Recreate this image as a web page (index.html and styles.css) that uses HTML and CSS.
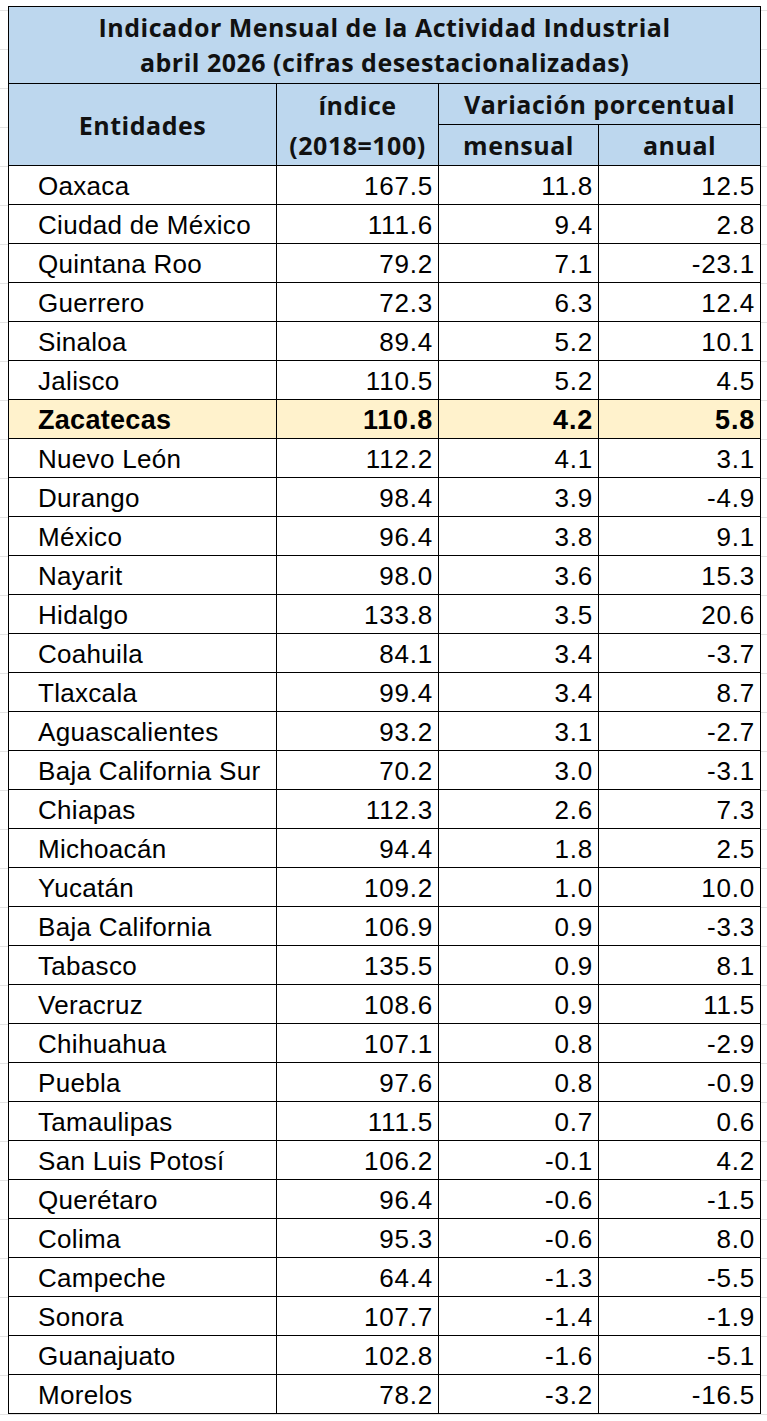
FILE: index.html
```html
<!DOCTYPE html>
<html lang="es">
<head>
<meta charset="utf-8">
<title>Indicador Mensual de la Actividad Industrial</title>
<link rel="stylesheet" href="styles.css">
</head>
<body>
<table class="imai">
  <colgroup>
    <col class="c-ent">
    <col class="c-idx">
    <col class="c-men">
    <col class="c-anu">
  </colgroup>
  <thead>
    <tr class="title-row">
      <th colspan="4" class="title">Indicador Mensual de la Actividad Industrial<br>abril 2026 (cifras desestacionalizadas)</th>
    </tr>
    <tr class="head-row">
      <th rowspan="2" class="hd">Entidades</th>
      <th rowspan="2" class="hd idx">índice<br>(2018=100)</th>
      <th colspan="2" class="hd">Variación porcentual</th>
    </tr>
    <tr class="head-row">
      <th class="hd">mensual</th>
      <th class="hd">anual</th>
    </tr>
  </thead>
  <tbody>
    <tr><td class="name">Oaxaca</td><td class="num">167.5</td><td class="num">11.8</td><td class="num">12.5</td></tr>
    <tr><td class="name">Ciudad de México</td><td class="num">111.6</td><td class="num">9.4</td><td class="num">2.8</td></tr>
    <tr><td class="name">Quintana Roo</td><td class="num">79.2</td><td class="num">7.1</td><td class="num">-23.1</td></tr>
    <tr><td class="name">Guerrero</td><td class="num">72.3</td><td class="num">6.3</td><td class="num">12.4</td></tr>
    <tr><td class="name">Sinaloa</td><td class="num">89.4</td><td class="num">5.2</td><td class="num">10.1</td></tr>
    <tr><td class="name">Jalisco</td><td class="num">110.5</td><td class="num">5.2</td><td class="num">4.5</td></tr>
    <tr class="hl"><td class="name">Zacatecas</td><td class="num">110.8</td><td class="num">4.2</td><td class="num">5.8</td></tr>
    <tr><td class="name">Nuevo León</td><td class="num">112.2</td><td class="num">4.1</td><td class="num">3.1</td></tr>
    <tr><td class="name">Durango</td><td class="num">98.4</td><td class="num">3.9</td><td class="num">-4.9</td></tr>
    <tr><td class="name">México</td><td class="num">96.4</td><td class="num">3.8</td><td class="num">9.1</td></tr>
    <tr><td class="name">Nayarit</td><td class="num">98.0</td><td class="num">3.6</td><td class="num">15.3</td></tr>
    <tr><td class="name">Hidalgo</td><td class="num">133.8</td><td class="num">3.5</td><td class="num">20.6</td></tr>
    <tr><td class="name">Coahuila</td><td class="num">84.1</td><td class="num">3.4</td><td class="num">-3.7</td></tr>
    <tr><td class="name">Tlaxcala</td><td class="num">99.4</td><td class="num">3.4</td><td class="num">8.7</td></tr>
    <tr><td class="name">Aguascalientes</td><td class="num">93.2</td><td class="num">3.1</td><td class="num">-2.7</td></tr>
    <tr><td class="name">Baja California Sur</td><td class="num">70.2</td><td class="num">3.0</td><td class="num">-3.1</td></tr>
    <tr><td class="name">Chiapas</td><td class="num">112.3</td><td class="num">2.6</td><td class="num">7.3</td></tr>
    <tr><td class="name">Michoacán</td><td class="num">94.4</td><td class="num">1.8</td><td class="num">2.5</td></tr>
    <tr><td class="name">Yucatán</td><td class="num">109.2</td><td class="num">1.0</td><td class="num">10.0</td></tr>
    <tr><td class="name">Baja California</td><td class="num">106.9</td><td class="num">0.9</td><td class="num">-3.3</td></tr>
    <tr><td class="name">Tabasco</td><td class="num">135.5</td><td class="num">0.9</td><td class="num">8.1</td></tr>
    <tr><td class="name">Veracruz</td><td class="num">108.6</td><td class="num">0.9</td><td class="num">11.5</td></tr>
    <tr><td class="name">Chihuahua</td><td class="num">107.1</td><td class="num">0.8</td><td class="num">-2.9</td></tr>
    <tr><td class="name">Puebla</td><td class="num">97.6</td><td class="num">0.8</td><td class="num">-0.9</td></tr>
    <tr><td class="name">Tamaulipas</td><td class="num">111.5</td><td class="num">0.7</td><td class="num">0.6</td></tr>
    <tr><td class="name">San Luis Potosí</td><td class="num">106.2</td><td class="num">-0.1</td><td class="num">4.2</td></tr>
    <tr><td class="name">Querétaro</td><td class="num">96.4</td><td class="num">-0.6</td><td class="num">-1.5</td></tr>
    <tr><td class="name">Colima</td><td class="num">95.3</td><td class="num">-0.6</td><td class="num">8.0</td></tr>
    <tr><td class="name">Campeche</td><td class="num">64.4</td><td class="num">-1.3</td><td class="num">-5.5</td></tr>
    <tr><td class="name">Sonora</td><td class="num">107.7</td><td class="num">-1.4</td><td class="num">-1.9</td></tr>
    <tr><td class="name">Guanajuato</td><td class="num">102.8</td><td class="num">-1.6</td><td class="num">-5.1</td></tr>
    <tr><td class="name">Morelos</td><td class="num">78.2</td><td class="num">-3.2</td><td class="num">-16.5</td></tr>
  </tbody>
</table>
</body>
</html>
```
FILE: styles.css
```css
html, body {
  margin: 0;
  padding: 0;
  background: #ffffff;
}
body {
  padding: 6px 0 0 8px;
  background-color: #ffffff;
  background-image:
    linear-gradient(to bottom, #e3e3e3 1px, transparent 1px);
  background-size: 100% 39px;
  background-position: 0 10px;
  min-height: 1421px;
  box-sizing: border-box;
}
.imai {
  border-collapse: collapse;
  table-layout: fixed;
  width: 752px;
  background: #ffffff;
  color: #000000;
}
.c-ent { width: 268px; }
.c-idx { width: 162px; }
.c-men { width: 160px; }
.c-anu { width: 162px; }
.imai th,
.imai td {
  border: 1px solid #000000;
  padding: 0;
}
.imai th {
  background: #bdd7ee;
  font-family: "Open Sans", "DejaVu Sans", sans-serif;
  font-weight: 700;
  font-size: 25px;
  letter-spacing: 0.5px;
  color: #111111;
  text-align: center;
  vertical-align: middle;
}
.title-row th {
  height: 76px;
  line-height: 35px;
  padding-top: 0;
}
.head-row th {
  height: 40px;
  line-height: 38px;
}
.head-row th.idx {
  line-height: 40px;
}
.imai tbody tr {
  height: 39px;
}
.imai td {
  height: 38px;
  font-family: "Liberation Sans", Arial, sans-serif;
  font-size: 26px;
  letter-spacing: 0.3px;
  line-height: 36px;
  vertical-align: middle;
  padding-top: 2px;
  box-sizing: border-box;
  overflow: hidden;
}
.imai td.name {
  text-align: left;
  padding-left: 29px;
  white-space: nowrap;
}
.imai td.num {
  text-align: right;
  padding-right: 5px;
  letter-spacing: 0.8px;
}
.imai tr.hl td {
  background: #fff2cc;
  font-weight: 700;
  font-size: 27px;
}
```
